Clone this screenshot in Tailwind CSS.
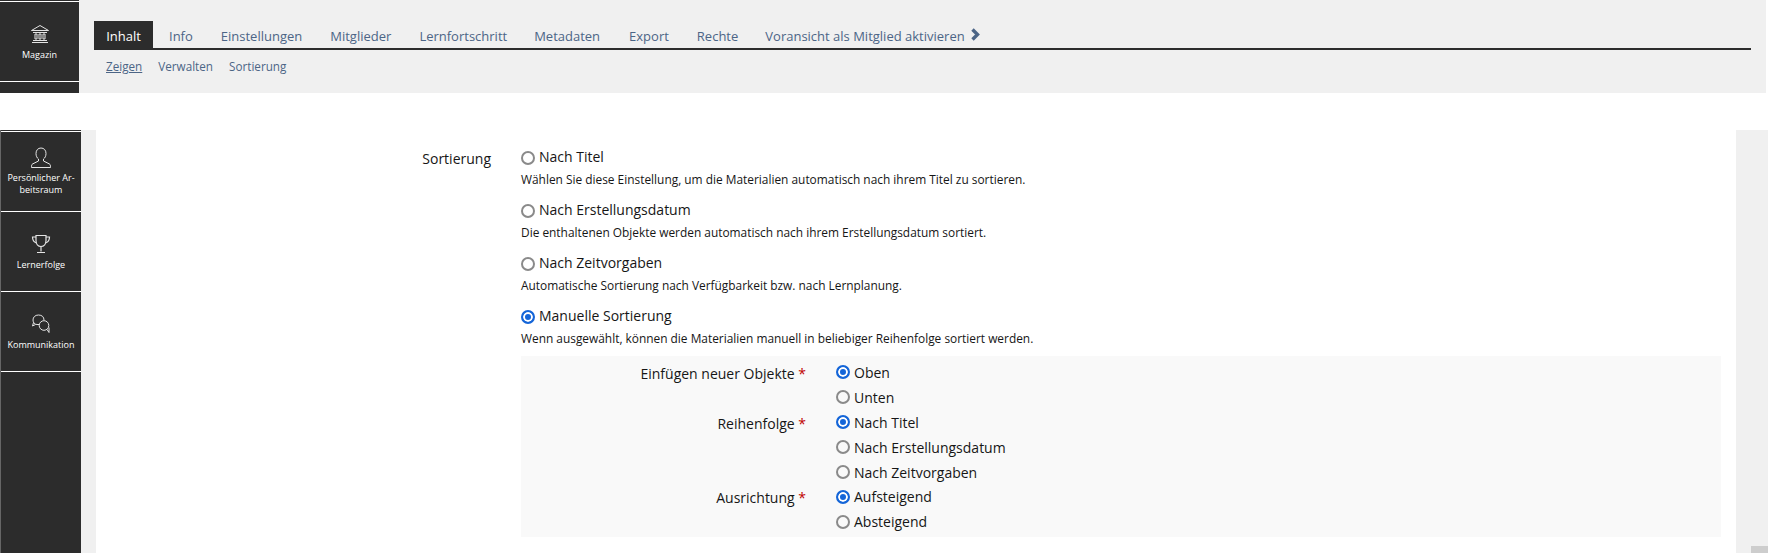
<!DOCTYPE html>
<html lang="de">

<head>
    <meta charset="UTF-8">
    <meta name="viewport" content="width=device-width, initial-scale=1.0">
    <title>Sortierung</title>
    <script src="https://cdn.jsdelivr.net/npm/@tailwindcss/browser@4"></script>
</head>

<body class="bg-white h-screen overflow-hidden font-['Open_Sans',sans-serif] text-[#161616]">
    <!-- Top -->
    <div class="flex h-[93px]">
        <div class="w-[79px] bg-[#2c2c2c] pt-[1px]">
            <div class="border-t border-b border-white h-[81px] flex flex-col items-center text-white text-[9px] pt-[22px]">
                <svg class="w-[20px] h-[20px] mb-[4px]" viewBox="0 0 20 20" fill="none" stroke="#e4e4e4" stroke-width="1">
                    <path d="M1.5 6.500 10 1.500l8.500 5z" />
                    <path d="M3 8.500h14M2 18.500h16M3 16.500h14" />
                    <path d="M5 10h2v5H5zM9 10h2v5H9zM13 10h2v5h-2z" />
                </svg>
                <span>Magazin</span>
            </div>
        </div>
        <div class="w-[1687px] bg-[#f0f0f0] pt-[21px] pl-[15px] pr-[15px]">
            <div class="flex items-stretch h-[29px] border-b-2 border-[#2c2c2c] text-[13px] text-[#4c6586] w-[1657px]">
                <a class="bg-[#2c2c2c] text-white w-[59px] pt-[4px] flex items-center justify-center">Inhalt</a>
                <a class="ml-[16px] pt-[4px] flex items-center">Info</a>
                <a class="ml-[28px] pt-[4px] flex items-center">Einstellungen</a>
                <a class="ml-[28px] pt-[4px] flex items-center">Mitglieder</a>
                <a class="ml-[28px] pt-[4px] flex items-center">Lernfortschritt</a>
                <a class="ml-[27px] pt-[4px] flex items-center">Metadaten</a>
                <a class="ml-[29px] pt-[4px] flex items-center">Export</a>
                <a class="ml-[28px] pt-[4px] flex items-center">Rechte</a>
                <a class="ml-[27px] pt-[4px] flex items-center">Voransicht als Mitglied aktivieren</a>
                <svg class="ml-[5px] self-center w-[11px] h-[13px]" viewBox="0 0 11 13" fill="none" stroke="#4c6586" stroke-width="3.400">
                    <path d="M2.500 1.500l5 5-5 5" />
                </svg>
            </div>
            <div class="flex gap-[16px] pl-[12px] pt-[8px] text-[11.700px] text-[#4c6586]">
                <a class="underline">Zeigen</a>
                <a>Verwalten</a>
                <a>Sortierung</a>
            </div>
        </div>
    </div>

    <div class="flex h-[423px] mt-[37px]">
        <!-- Sidebar -->
        <div class="w-[81px] h-[423px] bg-[#2c2c2c] border-l border-[#666] text-white text-[9px] text-center">
            <div class="h-[81px] mt-[1px] border-t border-b border-white flex flex-col items-center pt-[15px]">
                <svg class="w-[20px] h-[22px] mb-[3px]" viewBox="0 0 20 22" fill="none" stroke="#e4e4e4" stroke-width="1">
                    <path d="M10 1c-3 0-5 2.200-5 5.500 0 2.500 1 4.500 2.500 5.500v2L1.500 17c-.8.400-1 1.500-1 3.500h19c0-2-.2-3.100-1-3.500l-6-3v-2c1.500-1 2.500-3 2.500-5.500C15 3.200 13 1 10 1z" />
                </svg>
                <span class="leading-[12px]">Persönlicher Ar-<br>beitsraum</span>
            </div>
            <div class="h-[80px] border-b border-white flex flex-col items-center pt-[22px]">
                <svg class="w-[20px] h-[20px] mb-[4px]" viewBox="0 0 20 20" fill="none" stroke="#e4e4e4" stroke-width="1.200">
                    <path d="M5 1.500h10v5c0 3.500-2 6-5 6s-5-2.500-5-6z" />
                    <path d="M5 3H1.500c0 3 1 5 4 6M15 3h3.500c0 3-1 5-4 6M10 12.500v5M6 18.500h8" />
                </svg>
                <span>Lernerfolge</span>
            </div>
            <div class="h-[80px] border-b border-white flex flex-col items-center pt-[22px]">
                <svg class="w-[20px] h-[20px] mb-[4px]" viewBox="0 0 20 20" fill="none" stroke="#e4e4e4" stroke-width="1">
                    <path d="M8 10.500H6c-2.200 0-4-1.800-4-4.500S4 1 7.500 1 13 3 13 6" />
                    <path d="M2.500 8.500 1.500 12l3-1.500" />
                    <circle cx="13" cy="11.500" r="4.800" />
                    <path d="M16 15.500l2 3v-5" />
                </svg>
                <span>Kommunikation</span>
            </div>
        </div>
        <div class="w-[15px] bg-[#f0f0f0]"></div>

        <!-- Form -->
        <div class="flex-1 bg-white pl-[300px] pr-[15px]">
            <div class="flex">
                <div class="w-[95px] text-right text-[14px] pt-[19px] leading-[20px]">Sortierung</div>
                <div class="flex-1 pl-[30px] pt-[16px]">
                    <label class="flex items-center gap-[4px] h-[20px] text-[14px]"><input type="radio" name="s" class="appearance-none mt-[4px] w-[14px] h-[14px] rounded-full border-2 border-[#8a8a8a]"> Nach Titel</label>
                    <p class="text-[11.900px] leading-[16px] mt-[5px] h-[28px]">Wählen Sie diese Einstellung, um die Materialien automatisch nach ihrem Titel zu sortieren.</p>
                    <label class="flex items-center gap-[4px] h-[20px] text-[14px]"><input type="radio" name="s" class="appearance-none mt-[4px] w-[14px] h-[14px] rounded-full border-2 border-[#8a8a8a]"> Nach Erstellungsdatum</label>
                    <p class="text-[11.900px] leading-[16px] mt-[5px] h-[28px]">Die enthaltenen Objekte werden automatisch nach ihrem Erstellungsdatum sortiert.</p>
                    <label class="flex items-center gap-[4px] h-[20px] text-[14px]"><input type="radio" name="s" class="appearance-none mt-[4px] w-[14px] h-[14px] rounded-full border-2 border-[#8a8a8a]"> Nach Zeitvorgaben</label>
                    <p class="text-[11.900px] leading-[16px] mt-[5px] h-[28px]">Automatische Sortierung nach Verfügbarkeit bzw. nach Lernplanung.</p>
                    <label class="flex items-center gap-[4px] h-[20px] text-[14px]"><input type="radio" name="s" checked class="appearance-none mt-[4px] w-[14px] h-[14px] rounded-full border-2 border-[#1465d8] bg-[#1465d8] shadow-[inset_0_0_0_2px_white]"> Manuelle Sortierung</label>
                    <p class="text-[11.900px] leading-[16px] mt-[5px]">Wenn ausgewählt, können die Materialien manuell in beliebiger Reihenfolge sortiert werden.</p>

                    <!-- Sub form -->
                    <div class="mt-[10px] h-[181px] bg-[#f9f9f9] pt-[4px] text-[14px] grid grid-cols-[285px_1fr] auto-rows-[24.900px]">
                        <div class="text-right row-span-2 leading-[27px]">Einfügen neuer Objekte <span class="text-[#c00000]">*</span></div>
                        <div class="pl-[30px] flex items-center gap-[4px]"><input type="radio" name="a" checked class="appearance-none w-[14px] h-[14px] rounded-full border-2 border-[#1465d8] bg-[#1465d8] shadow-[inset_0_0_0_2px_white]"> Oben</div>
                        <div class="pl-[30px] flex items-center gap-[4px]"><input type="radio" name="a" class="appearance-none w-[14px] h-[14px] rounded-full border-2 border-[#8a8a8a]"> Unten</div>
                        <div class="text-right row-span-3 leading-[27px]">Reihenfolge <span class="text-[#c00000]">*</span></div>
                        <div class="pl-[30px] flex items-center gap-[4px]"><input type="radio" name="b" checked class="appearance-none w-[14px] h-[14px] rounded-full border-2 border-[#1465d8] bg-[#1465d8] shadow-[inset_0_0_0_2px_white]"> Nach Titel</div>
                        <div class="pl-[30px] flex items-center gap-[4px]"><input type="radio" name="b" class="appearance-none w-[14px] h-[14px] rounded-full border-2 border-[#8a8a8a]"> Nach Erstellungsdatum</div>
                        <div class="pl-[30px] flex items-center gap-[4px]"><input type="radio" name="b" class="appearance-none w-[14px] h-[14px] rounded-full border-2 border-[#8a8a8a]"> Nach Zeitvorgaben</div>
                        <div class="text-right row-span-2 leading-[27px]">Ausrichtung <span class="text-[#c00000]">*</span></div>
                        <div class="pl-[30px] flex items-center gap-[4px]"><input type="radio" name="c" checked class="appearance-none w-[14px] h-[14px] rounded-full border-2 border-[#1465d8] bg-[#1465d8] shadow-[inset_0_0_0_2px_white]"> Aufsteigend</div>
                        <div class="pl-[30px] flex items-center gap-[4px]"><input type="radio" name="c" class="appearance-none w-[14px] h-[14px] rounded-full border-2 border-[#8a8a8a]"> Absteigend</div>
                    </div>
                </div>
            </div>
        </div>

        <div class="w-[32px] bg-[#f0f0f0] flex justify-end items-end">
            <div class="w-[17px] h-[7px] bg-[#cdcdcd]"></div>
        </div>
    </div>
</body>

</html>
